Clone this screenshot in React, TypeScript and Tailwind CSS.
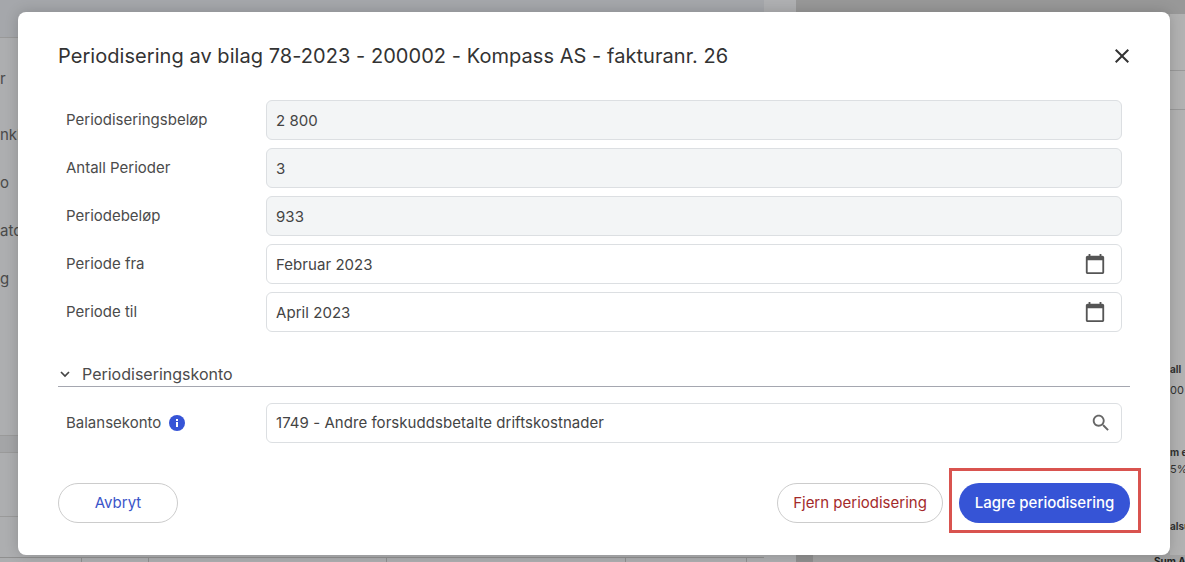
const font = { fontFamily: "Inter, 'Noto Sans', sans-serif" };

function CalendarIcon() {
  return (
    <svg width="22" height="22" viewBox="0 0 24 24" fill="#555">
      <path d="M20 3h-1V1h-2v2H7V1H5v2H4c-1.1 0-2 .9-2 2v16c0 1.1.9 2 2 2h16c1.1 0 2-.9 2-2V5c0-1.1-.9-2-2-2zm0 18H4V8h16v13z" />
    </svg>
  );
}

function SearchIcon() {
  return (
    <svg width="22" height="22" viewBox="0 0 24 24" fill="#666">
      <path d="M15.5 14h-.79l-.28-.27C15.41 12.59 16 11.11 16 9.5 16 5.91 13.09 3 9.5 3S3 5.91 3 9.5 5.91 16 9.5 16c1.61 0 3.09-.59 4.23-1.57l.27.28v.79l5 4.99L20.49 19l-4.99-5zm-6 0C7.01 14 5 11.99 5 9.5S7.01 5 9.5 5 14 7.01 14 9.5 11.99 14 9.5 14z" />
    </svg>
  );
}

function CloseIcon() {
  return (
    <svg width="24" height="24" viewBox="0 0 24 24" fill="#333">
      <path d="M19 6.41 17.59 5 12 10.59 6.41 5 5 6.41 10.59 12 5 17.59 6.41 19 12 13.41 17.59 19 19 17.59 13.41 12z" />
    </svg>
  );
}

function ChevronIcon() {
  return (
    <svg width="14" height="14" viewBox="0 0 14 14" fill="none" stroke="#444" strokeWidth="1.7">
      <path d="M3 5l4 4 4-4" />
    </svg>
  );
}

function InfoIcon() {
  return (
    <svg width="16" height="16" viewBox="0 0 16 16">
      <circle cx="8" cy="8" r="8" fill="#3654d6" />
      <rect x="7" y="7" width="2" height="5" fill="#fff" />
      <rect x="7" y="4" width="2" height="2" fill="#fff" />
    </svg>
  );
}

function Field({ label, value, disabled, icon }: { label: string; value: string; disabled?: boolean; icon?: boolean }) {
  return (
    <div className="flex items-center h-10">
      <div className="w-[208px] pl-2 text-[15px] text-[#4b4b4b]">{label}</div>
      <div
        className={`flex-1 h-10 flex items-center justify-between pl-[9px] pr-[15px] rounded-md border border-[#dcdfe2] text-[15px] tracking-[0.05px] text-[#444] ${
          disabled ? "bg-[#f3f5f6]" : "bg-white"
        }`}
      >
        <span className="pt-[2px]">{value}</span>
        {icon && <CalendarIcon />}
      </div>
    </div>
  );
}

export default function App() {
  return (
    <div className="relative w-[1185px] h-[562px] overflow-hidden flex bg-[#adaeb0]" style={font}>
      {/* page behind the dialog */}
      <div className="w-[764px] flex flex-col">
        <div className="h-[38px] shrink-0 bg-[#a5a7ab] border-b border-[#999]" />
        <div className="w-[18px] overflow-hidden pt-[31px] text-[15px] leading-5 text-[#4a4a4a] flex flex-col gap-[28px] whitespace-nowrap">
          <div className="mb-[8px]">r</div>
          <div>nkk</div>
          <div>o</div>
          <div>ato</div>
          <div>g</div>
        </div>
        <div className="mt-[146px] h-[18px] shrink-0 bg-[#a4a5a7] border-y border-[#9a9a9a]" />
        <div className="mt-[63px] border-t border-[#9a9a9a]" />
        <div className="mt-[40px] h-[5px] border-t border-[#8f8f8f] flex">
          <div className="w-[82px] border-r border-[#8f8f8f]" />
          <div className="w-[67px] border-r border-[#8f8f8f]" />
          <div className="w-[238px] border-r border-[#8f8f8f]" />
          <div className="w-[239px] border-r border-[#8f8f8f]" />
          <div className="w-[121px] border-r border-[#8f8f8f]" />
        </div>
      </div>
      <div className="w-[32px] bg-[#adaeb0]">
        <div className="h-[38px] bg-[#afb0b2]" />
      </div>
      <div className="flex-1 flex flex-col bg-[#a3a3a3] items-end">
        <div className="h-[14px] w-full shrink-0 bg-[#989898]" />
        <div className="w-[15px] flex-1 bg-[#b2b2b2] overflow-hidden whitespace-nowrap text-[#333] flex flex-col">
          <div className="h-[57px] shrink-0 border-b border-[#999]" />
          <div className="h-[39px] shrink-0 border-b border-[#999]" />
          <div className="mt-[253px] text-[10px] font-bold leading-3">all</div>
          <div className="mt-[9px] text-[11px] leading-3">00</div>
          <div className="mt-[50px] text-[10px] font-bold leading-3">m e</div>
          <div className="mt-[5px] text-[11px] leading-3">5%</div>
          <div className="mt-[45px] text-[10px] font-bold leading-3">alsu</div>
        </div>
        <div className="w-full h-[7px] shrink-0 flex justify-between overflow-hidden">
          <div className="w-[17px] bg-[#8f8f8f]" />
          <div className="w-[31px] whitespace-nowrap text-[10px] font-bold leading-3 text-[#222]">Sum A</div>
        </div>
      </div>

      {/* dialog */}
      <div className="absolute left-[18px] top-[12px] w-[1152px] h-[543px] bg-white rounded-lg shadow-[0_0_14px_rgba(0,0,0,0.18)] px-10 pt-[31px]">
        <div className="flex items-center justify-between h-[26px]">
          <h1 className="text-xl tracking-[0.05px] text-[#333] leading-[26px]">
            Periodisering av bilag 78-2023 - 200002 - Kompass AS - fakturanr. 26
          </h1>
          <div className="-mr-[4px]">
            <CloseIcon />
          </div>
        </div>

        <div className="mt-[31px] pr-2 flex flex-col gap-2">
          <Field label="Periodiseringsbeløp" value="2 800" disabled />
          <Field label="Antall Perioder" value="3" disabled />
          <Field label="Periodebeløp" value="933" disabled />
          <Field label="Periode fra" value="Februar 2023" icon />
          <Field label="Periode til" value="April 2023" icon />
        </div>

        <div className="mt-[32px] h-[23px] pb-[2px] flex items-center border-b border-[#a5a7b0] text-base text-[#4b4b4b]">
          <span className="mr-[10px]">
            <ChevronIcon />
          </span>
          Periodiseringskonto
        </div>

        <div className="mt-4 pr-2 flex items-center h-10">
          <div className="w-[208px] pl-2 flex items-center gap-2 text-[15px] text-[#4b4b4b]">
            Balansekonto
            <InfoIcon />
          </div>
          <div className="flex-1 h-10 flex items-center justify-between pl-[9px] pr-[9px] rounded-md border border-[#dcdfe2] text-[15px] tracking-[0.05px] text-[#444]">
            <span>1749 - Andre forskuddsbetalte driftskostnader</span>
            <SearchIcon />
          </div>
        </div>

        <div className="mt-10 flex items-center justify-between">
          <button className="w-[120px] h-10 rounded-full border border-[#ccc] text-[15px] text-[#3b55c9]">Avbryt</button>
          <div className="flex items-center gap-4">
            <button className="w-[166px] h-10 rounded-full border border-[#ccc] text-[15px] text-[#a32a2a]">Fjern periodisering</button>
            <button className="w-[171px] h-10 rounded-full bg-[#3654d6] text-[15px] font-medium text-white">Lagre periodisering</button>
          </div>
        </div>
      </div>

      {/* red highlight round the save button */}
      <div className="absolute left-[949px] top-[468px] w-[192px] h-[65px] border-[3px] border-[#d9534f]" />
    </div>
  );
}
